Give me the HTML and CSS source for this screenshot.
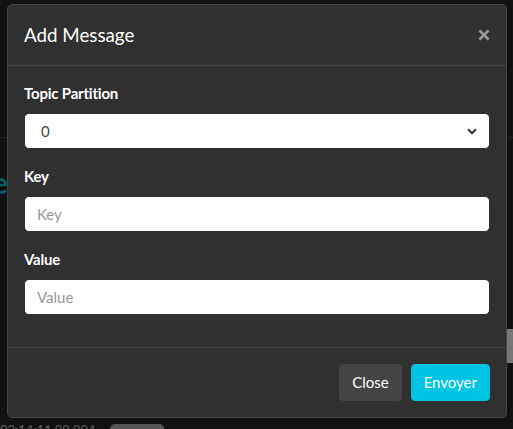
FILE: index.html
```html
<!DOCTYPE html>
<html lang="en">
<head>
<meta charset="utf-8">
<title>Add Message</title>
<link rel="stylesheet" href="styles.css">
</head>
<body>
<div class="page">
  <header class="navbar"></header>
  <main class="content">
    <h1 class="page-title">Topic Message</h1>
    <div class="log-row">
      <span class="log-time">02:14:11.99.804</span>
      <span class="log-pill"></span>
    </div>
  </main>
  <div class="scroll-thumb"></div>

  <div class="backdrop"></div>

  <div class="modal" role="dialog">
    <div class="modal-header">
      <h5 class="modal-title">Add Message</h5>
      <button class="btn-close" type="button" aria-label="Close">
        <svg width="12" height="12" viewBox="0 0 12 12"><path d="M1.5 1.5 L10.5 10.5 M10.5 1.5 L1.5 10.5" stroke="#9a9a9a" stroke-width="2.6" stroke-linecap="butt" fill="none"/></svg>
      </button>
    </div>
    <div class="modal-body">
      <div class="form-group">
        <label class="form-label">Topic Partition</label>
        <div class="select-wrap">
          <select class="form-control select">
            <option>0</option>
          </select>
          <svg class="chevron" width="10" height="7" viewBox="0 0 10 7"><path d="M1 1.2 L5 5.2 L9 1.2" stroke="#3a3a3a" stroke-width="2.2" fill="none"/></svg>
        </div>
      </div>
      <div class="form-group">
        <label class="form-label">Key</label>
        <input class="form-control" type="text" placeholder="Key">
      </div>
      <div class="form-group">
        <label class="form-label">Value</label>
        <input class="form-control" type="text" placeholder="Value">
      </div>
    </div>
    <div class="modal-footer">
      <button class="btn btn-secondary" type="button">Close</button>
      <button class="btn btn-info" type="button">Envoyer</button>
    </div>
  </div>
</div>
</body>
</html>
```

FILE: styles.css
```css
* { box-sizing: border-box; }

html, body {
  margin: 0;
  padding: 0;
}

body {
  font-family: Lato, "Noto Sans", "Liberation Sans", sans-serif;
  font-size: 15px;
  line-height: 1.5;
  color: #fff;
  background: #222;
}

.page {
  position: relative;
  height: 429px;
  overflow: hidden;
  background: #222;
}

.navbar {
  height: 138px;
  border-bottom: 1px solid #444;
}

.content {
  display: flex;
  flex-direction: column;
}

.page-title {
  width: 260px;
  margin: 26px 0 0 -252px;
  font-size: 30px;
  font-weight: 700;
  line-height: 1.2;
  text-align: right;
  color: #16b3cc;
  white-space: nowrap;
}

.log-row {
  display: flex;
  align-items: center;
  gap: 14px;
  margin-top: 221px;
  font-size: 13px;
  color: #bbb;
}

.log-time {
  white-space: nowrap;
}

.log-pill {
  width: 54px;
  height: 14px;
  border-radius: 5px;
  background: #aaa;
}

.scroll-thumb {
  position: absolute;
  right: 0;
  top: 329px;
  width: 6px;
  height: 34px;
  background: #eee;
}

.backdrop {
  position: absolute;
  inset: 0;
  background: rgba(0, 0, 0, 0.5);
}

.modal {
  position: absolute;
  left: 7px;
  top: 4px;
  width: 500px;
  background: #303030;
  border: 1px solid #444;
  border-radius: 5px;
  display: flex;
  flex-direction: column;
}

.modal-header {
  display: flex;
  align-items: center;
  justify-content: space-between;
  padding: 16px;
  border-bottom: 1px solid #444;
}

.modal-title {
  margin: 0;
  font-size: 18.75px;
  font-weight: 400;
  line-height: 28px;
  color: #fff;
}

.btn-close {
  display: flex;
  padding: 0;
  margin: 0;
  background: none;
  border: 0;
  cursor: pointer;
}

.modal-body {
  padding: 16px;
}

.form-group {
  margin-bottom: 16px;
}

.form-label {
  display: block;
  margin-bottom: 8px;
  font-size: 15px;
  line-height: 22.5px;
  font-weight: 700;
  letter-spacing: -0.2px;
  color: #fff;
}

.form-control {
  display: block;
  width: 100%;
  height: 36.5px;
  padding: 6px 12px;
  font-family: inherit;
  font-size: 15px;
  line-height: 1.5;
  color: #444;
  background: #fff;
  border: 1px solid #303030;
  border-radius: 5px;
  outline: none;
}

.form-control::placeholder {
  color: #9a9a9a;
}

.select-wrap {
  position: relative;
}

.select {
  appearance: none;
  -webkit-appearance: none;
  padding-left: 16px;
}

.chevron {
  position: absolute;
  right: 13px;
  top: 15px;
  pointer-events: none;
}

.modal-footer {
  display: flex;
  justify-content: flex-end;
  gap: 9px;
  padding: 16px;
  border-top: 1px solid #444;
}

.btn {
  height: 36.5px;
  padding: 6px 12px;
  font-family: inherit;
  font-size: 15px;
  line-height: 1.5;
  color: #fff;
  border: 1px solid transparent;
  border-radius: 4px;
  cursor: pointer;
}

.btn-secondary {
  background: #444;
  border-color: #444;
}

.btn-info {
  background: #00c4e4;
  border-color: #00c4e4;
}
```
